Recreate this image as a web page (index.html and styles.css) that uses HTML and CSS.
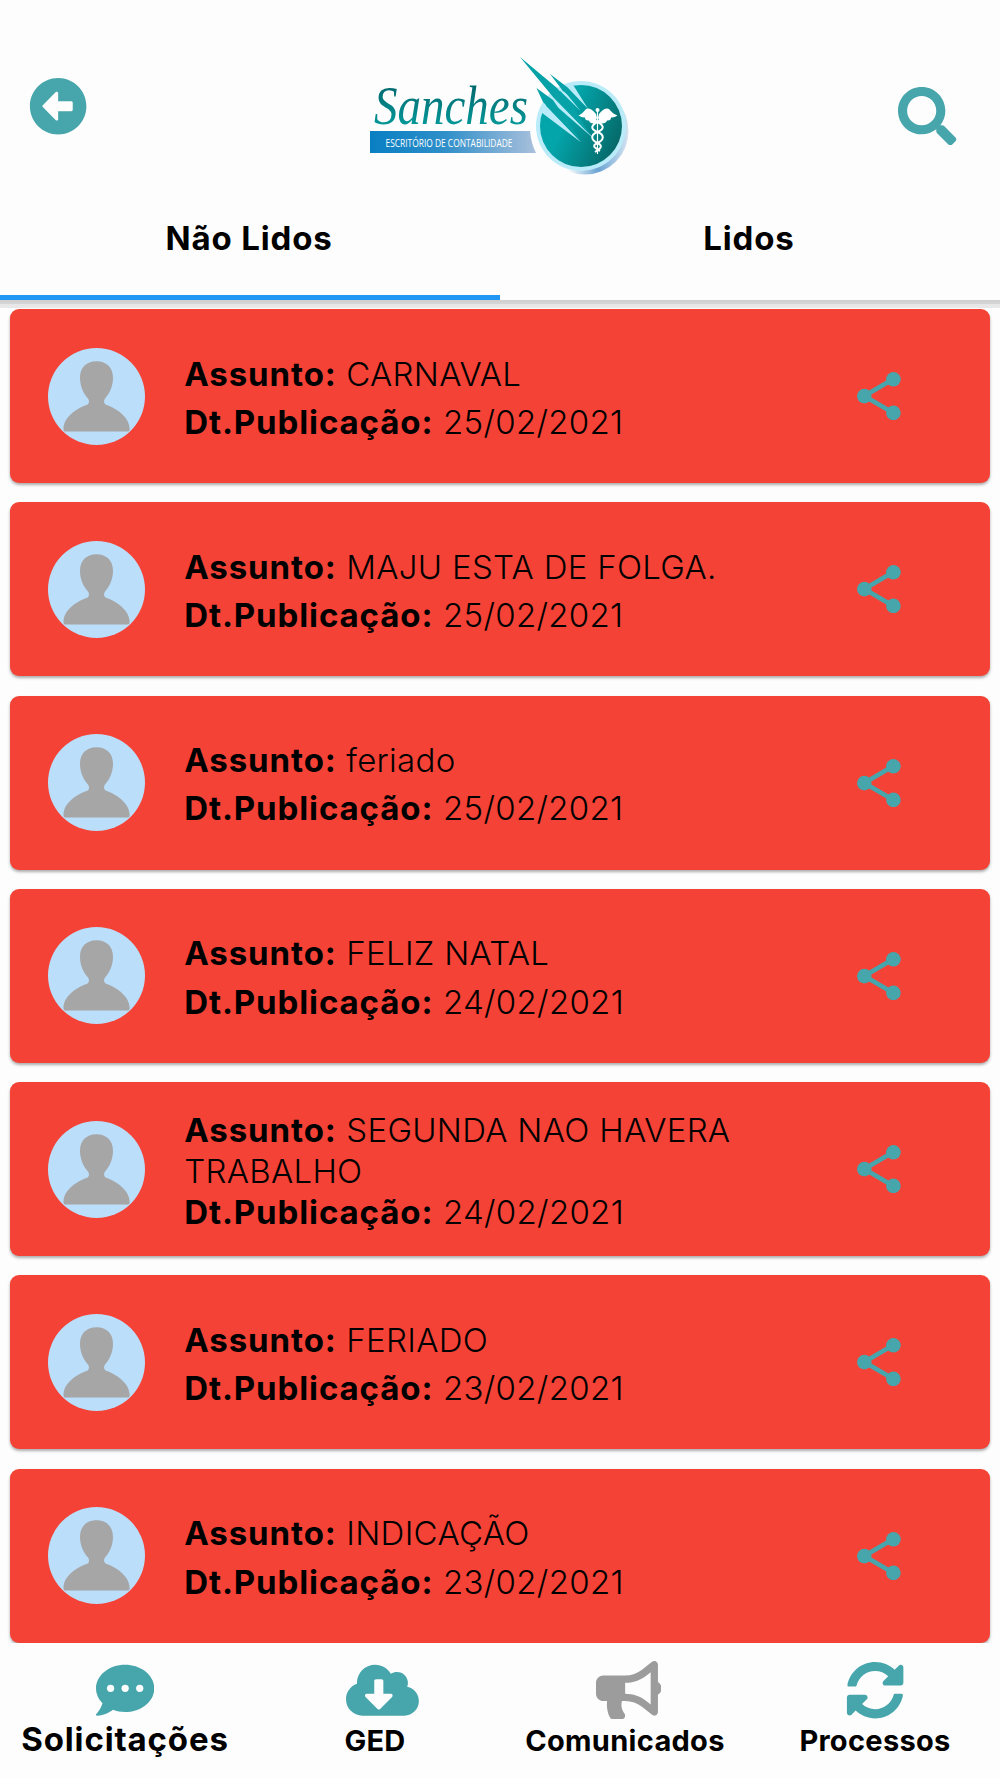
FILE: index.html
```html
<!DOCTYPE html>
<html lang="pt-BR">
<head>
<meta charset="utf-8">
<title>Comunicados</title>
<link rel="stylesheet" href="styles.css">
</head>
<body>
<svg width="0" height="0" class="defs" aria-hidden="true">
  <symbol id="person" viewBox="0 0 97 97">
    <path d="M48.500 13.300C38 13.300 32 20 32 30C32 39 36 46 40 50.500C41.600 52.500 41.300 55.500 39.300 56.800C27 61 15.500 70 15.500 81Q15.500 83.500 17 83.500H80Q81.700 83.500 81.700 81C81.500 70 70 61 58 56.800C55.700 55.500 55.500 52.500 57 50.500C61 46 65 39 65 30C65 20 59 13.300 48.500 13.300Z"/>
  </symbol>
  <symbol id="share" viewBox="0 0 44 48">
    <path d="M36.400 7.100L7.300 24L36.400 41" fill="none" stroke="currentColor" stroke-width="4.600"/>
    <circle cx="36.400" cy="7.300" r="7.300"/><circle cx="7.300" cy="24.100" r="7.300"/><circle cx="36.400" cy="40.900" r="7.300"/>
  </symbol>
</svg>
<div class="app">
  <header class="header">
    <svg class="icon back" viewBox="0 0 512 512"><path d="M256 504C119 504 8 393 8 256S119 8 256 8s248 111 248 248-111 248-248 248zm116-292H256v-70.900c0-10.700-13-16.100-20.500-8.500L121.200 247.500c-4.700 4.700-4.700 12.200 0 16.900l114.300 114.900c7.600 7.600 20.500 2.200 20.500-8.500V300h116c6.600 0 12-5.400 12-12v-64c0-6.600-5.400-12-12-12z"/></svg>
    <svg class="logo" viewBox="0 0 300 150">
      <defs>
        <linearGradient id="bar"><stop offset="0" stop-color="#087fc3"/><stop offset=".45" stop-color="#2f8fc9"/><stop offset="1" stop-color="#a9c0dc"/></linearGradient>
        <linearGradient id="disc" x1="0" y1=".3" x2="1" y2=".75"><stop offset=".3" stop-color="#03a5ab"/><stop offset="1" stop-color="#066463"/></linearGradient>
        <linearGradient id="word" x1="0" y1="0" x2="0" y2="1"><stop offset=".2" stop-color="#026b70"/><stop offset="1" stop-color="#06a5a5"/></linearGradient>
        <linearGradient id="rim" x1="0" y1="0" x2="1" y2="0"><stop offset=".3" stop-color="#fdfdfd"/><stop offset=".65" stop-color="#6aa3d3"/><stop offset="1" stop-color="#d5e4f1"/></linearGradient>
      </defs>
      <path d="M20 91H180Q181 103 186 113H20Z" fill="url(#bar)"/>
      <text x="35.500" y="107" class="logo-tag" textLength="127" lengthAdjust="spacingAndGlyphs">ESCRITÓRIO DE CONTABILIDADE</text>
      <text x="24" y="84" class="logo-name" textLength="154" lengthAdjust="spacingAndGlyphs">Sanches</text>
      <circle cx="235" cy="91" r="43.500" fill="url(#rim)"/>
      <circle cx="231" cy="86" r="45" fill="#b9ecf8"/>
      <circle cx="231" cy="86" r="41" fill="url(#disc)"/>
      <path d="M189.500 71L194.300 64L231 102.300Z M201.700 62L199 55L208 56L243 98Z M205 46L215 52L230.700 71Z M214 44L223.500 45.500L238.300 69.300Z" fill="#b9ecf8"/>
      <path d="M170 17L207 48L222 66L241 96L203 57Z M200 34L217 47L238 69L213 51Z M186.500 48L203 60L231 101L193 62Z" fill="#06a2a8"/>
      <g fill="#fff">
        <path d="M246 74Q240 67 236 69Q232 74 228.500 75.500Q232 78 235 77.500Q235 81 239 80.500Q240 84 244.500 83.500L247 78Z"/>
        <path d="M249 74Q255 67 259 69Q263 74 267.500 75.500Q264 78 261 77.500Q261 81 257 80.500Q256 84 250.500 83.500L248 78Z"/>
        <circle cx="247.500" cy="70" r="2"/>
      </g>
      <g fill="none" stroke="#fff">
        <path d="M247.500 70V114" stroke-width="1.200"/>
        <path d="M244 80C255 85 255 89 247.500 92S241 100 247.500 103S250 109 245 112M251 80C240 85 240 89 247.500 92S254 100 247.500 103S245 108 250 111" stroke-width="2"/>
      </g>
    </svg>
    <svg class="icon search" viewBox="0 0 512 512"><path d="M505 442.700L405.300 343c-4.500-4.500-10.600-7-17-7H372c27.600-35.300 44-79.700 44-128C416 93.100 322.900 0 208 0S0 93.100 0 208s93.100 208 208 208c48.300 0 92.700-16.400 128-44v16.300c0 6.400 2.500 12.500 7 17l99.700 99.700c9.400 9.400 24.600 9.400 33.900 0l28.300-28.300c9.400-9.400 9.400-24.600.1-34zM208 336c-70.700 0-128-57.200-128-128 0-70.700 57.200-128 128-128 70.700 0 128 57.200 128 128 0 70.700-57.200 128-128 128z"/></svg>
  </header>
  <nav class="tabs"><a class="tab active">Não Lidos</a><a class="tab">Lidos</a></nav>
  <main class="list">
    <article class="card"><svg class="avatar"><use href="#person"/></svg><div class="info"><p><b>Assunto:</b> CARNAVAL</p><p><b>Dt.Publicação:</b> 25/02/2021</p></div><svg class="share"><use href="#share"/></svg></article>
    <article class="card"><svg class="avatar"><use href="#person"/></svg><div class="info"><p><b>Assunto:</b> MAJU ESTA DE FOLGA.</p><p><b>Dt.Publicação:</b> 25/02/2021</p></div><svg class="share"><use href="#share"/></svg></article>
    <article class="card"><svg class="avatar"><use href="#person"/></svg><div class="info"><p><b>Assunto:</b> feriado</p><p><b>Dt.Publicação:</b> 25/02/2021</p></div><svg class="share"><use href="#share"/></svg></article>
    <article class="card"><svg class="avatar"><use href="#person"/></svg><div class="info"><p><b>Assunto:</b> FELIZ NATAL</p><p><b>Dt.Publicação:</b> 24/02/2021</p></div><svg class="share"><use href="#share"/></svg></article>
    <article class="card"><svg class="avatar"><use href="#person"/></svg><div class="info compact"><p><b>Assunto:</b> SEGUNDA NAO HAVERA<br>TRABALHO</p><p><b>Dt.Publicação:</b> 24/02/2021</p></div><svg class="share"><use href="#share"/></svg></article>
    <article class="card"><svg class="avatar"><use href="#person"/></svg><div class="info"><p><b>Assunto:</b> FERIADO</p><p><b>Dt.Publicação:</b> 23/02/2021</p></div><svg class="share"><use href="#share"/></svg></article>
    <article class="card"><svg class="avatar"><use href="#person"/></svg><div class="info"><p><b>Assunto:</b> INDICAÇÃO</p><p><b>Dt.Publicação:</b> 23/02/2021</p></div><svg class="share"><use href="#share"/></svg></article>
  </main>
  <nav class="bottom">
    <a class="item large"><svg class="icon" viewBox="0 0 512 512"><path d="M256 32C114.600 32 0 125.100 0 240c0 49.600 21.400 95 57 130.700C44.500 421.100 2.700 466 2.200 466.500c-2.200 2.300-2.800 5.700-1.500 8.700S4.800 480 8 480c66.300 0 116-31.800 140.600-51.400 32.700 12.300 69 19.400 107.400 19.400 141.400 0 256-93.100 256-208S397.400 32 256 32z"/><g fill="#fdfdfd"><circle cx="128" cy="240" r="32"/><circle cx="256" cy="240" r="32"/><circle cx="384" cy="240" r="32"/></g></svg><span>Solicitações</span></a>
    <a class="item"><svg class="icon cloud" viewBox="0 0 640 512"><path d="M537.600 226.600c4.100-10.700 6.400-22.400 6.400-34.600 0-53-43-96-96-96-19.700 0-38.100 6-53.300 16.200C367 64.200 315.300 32 256 32c-88.400 0-160 71.600-160 160 0 2.700.1 5.400.2 8.100C40.200 219.800 0 273.200 0 336c0 79.500 64.500 144 144 144h368c70.700 0 128-57.300 128-128 0-61.900-44-113.600-102.400-125.400zm-132.900 88.700L299.300 420.700c-6.200 6.200-16.400 6.200-22.600 0L171.300 315.300c-10.100-10.100-2.900-27.300 11.300-27.300H248V176c0-8.800 7.200-16 16-16h48c8.800 0 16 7.200 16 16v112h65.400c14.200 0 21.400 17.200 11.300 27.300z"/></svg><span>GED</span></a>
    <a class="item current"><svg class="icon horn" viewBox="0 0 576 512"><path d="M576 240c0-23.630-12.950-44.040-32-55.120V32.010C544 23.260 537.020 0 512 0c-7.120 0-14.190 2.380-19.980 7.020l-85.030 68.030C364.280 109.190 310.660 128 256 128H64c-35.350 0-64 28.650-64 64v96c0 35.350 28.650 64 64 64h33.700c-1.390 10.480-2.180 21.140-2.180 32 0 39.770 9.260 77.350 25.560 110.940 5.190 10.690 16.520 17.060 28.400 17.060h74.280c26.050 0 41.690-29.840 25.900-50.560-16.400-21.520-26.150-48.360-26.150-77.440 0-11.110 1.620-21.790 4.410-32H256c54.660 0 108.280 18.810 150.980 52.950l85.030 68.030a32.023 32.023 0 0 0 19.980 7.020c24.920 0 32-22.780 32-32V295.130C563.050 284.040 576 263.630 576 240zm-96 141.420l-33.050-26.440C392.950 311.780 325.120 288 256 288v-96c69.120 0 136.950-23.780 190.950-66.980L480 98.580v282.840z"/></svg><span>Comunicados</span></a>
    <a class="item"><svg class="icon" viewBox="0 0 512 512"><path d="M370.720 133.280C339.458 104.008 298.888 87.962 255.848 88c-77.458.068-144.328 53.178-162.791 126.850-1.344 5.363-6.122 9.150-11.651 9.150H24.103c-7.498 0-13.194-6.807-11.807-14.176C33.933 94.924 134.813 8 256 8c66.448 0 126.791 26.136 171.315 68.685L463.030 40.970C478.149 25.851 504 36.559 504 57.941V192c0 13.255-10.745 24-24 24H345.941c-21.382 0-32.090-25.851-16.971-40.971l41.750-41.749zM32 296h134.059c21.382 0 32.090 25.851 16.971 40.971l-41.750 41.750c31.262 29.273 71.835 45.319 114.876 45.280 77.418-.070 144.315-53.144 162.787-126.849 1.344-5.363 6.122-9.150 11.651-9.150h57.304c7.498 0 13.194 6.807 11.807 14.176C478.067 417.076 377.187 504 256 504c-66.448 0-126.791-26.136-171.315-68.685L48.970 471.030C33.851 486.149 8 475.441 8 454.059V320c0-13.255 10.745-24 24-24z"/></svg><span>Processos</span></a>
  </nav>
</div>
</body>
</html>
```
FILE: styles.css
```css
* { box-sizing: border-box; }
body {
  margin: 0;
  background: #fdfdfd;
  color: #000;
  font-family: Inter, "Liberation Sans", sans-serif;
}
.defs { display: block; }
.app {
  width: 1000px;
  height: 1778px;
  display: flex;
  flex-direction: column;
  overflow: hidden;
}
.icon { display: block; width: 58.3px; height: 58.3px; fill: #47a5ac; }
.header {
  height: 190px;
  flex: none;
  display: flex;
  justify-content: space-between;
  align-items: flex-start;
  padding: 40px 43.5px 0 29px;
}
.back { margin-top: 37.3px; }
.search { margin-top: 47px; }
.logo { width: 300px; height: 150px; margin-left: 14.5px; }
.logo-tag { font: 11.500px "Open Sans", sans-serif; fill: #fff; }
.logo-name { font: italic 54px "Liberation Serif", serif; fill: url(#word); }
.tabs {
  flex: none;
  height: 110px;
  display: flex;
}
.tab {
  flex: 1;
  padding: 28px 2px 0 0;
  text-align: center;
  font-size: 33px;
  line-height: 41px;
  font-weight: 660;
  letter-spacing: 0.85px;
  border-bottom: 5px solid transparent;
}
.tab.active { border-color: #2196f3; }
.list {
  flex: none;
  height: 1343px;
  overflow: hidden;
  padding: 9px 9.7px 0;
  display: flex;
  flex-direction: column;
  gap: 19.3px;
  background: linear-gradient(#cfcfcf, #d6d6d6 4px, #e6e6e6 4px, #e8e8e8 8px, transparent 8px) no-repeat;
}
.card {
  flex: none;
  height: 174px;
  display: flex;
  align-items: center;
  padding: 0 89px 0 38.7px;
  border-radius: 9px;
  background: #f54236;
  box-shadow: 0 2px 3px rgba(0, 0, 0, .32);
}
.avatar {
  width: 97px;
  height: 97px;
  border-radius: 50%;
  background: #bbdefb;
  fill: #a6a6a6;
}
.info {
  flex: 1;
  display: flex;
  flex-direction: column;
  gap: 7.3px;
  padding: 4.5px 0 0 38.8px;
  font-size: 33px;
  line-height: 41px;
  white-space: nowrap;
}
.info.compact { gap: 0; }
.info p { margin: 0; font-weight: 350; letter-spacing: 0.3px; }
.info b { font-weight: 660; letter-spacing: 0.9px; }
.share { width: 44px; height: 48px; color: #47a5ac; fill: #47a5ac; }
.bottom { flex: 1; display: flex; padding-top: 18px; }
.item {
  width: 250px;
  display: flex;
  flex-direction: column;
  align-items: center;
  font-size: 29px;
  line-height: 36px;
  font-weight: 660;
  letter-spacing: 0.3px;
}
.item span { margin-top: 4px; }
.large { font-size: 33px; letter-spacing: 0.85px; }
.large span { margin-top: 1.5px; }
.cloud { width: 72.900px; margin-left: 14.6px; }
.horn { width: 65.600px; margin-left: 7.4px; }
.current .icon { fill: #9c9c9c; }
```
